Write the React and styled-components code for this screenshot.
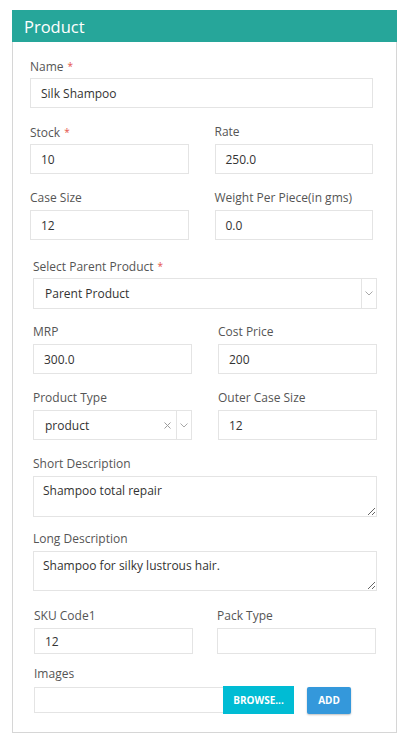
import React from "react";
import styled, { createGlobalStyle } from "styled-components";

const GlobalStyle = createGlobalStyle`
  body {
    margin: 0;
    background: #fff;
    font-family: "Open Sans", "Noto Sans", Arial, sans-serif;
  }
`;

const Page = styled.div`
  padding: 10px 0 0 12px;
`;

const Card = styled.div`
  width: 385px;
  box-sizing: border-box;
  border: 1px solid #d6d6d6;
  border-top: none;
`;

const Header = styled.div`
  background: #26a69a;
  height: 32px;
  padding-left: 12px;
  display: flex;
  align-items: center;
  color: #fff;
  font-size: 16.5px;
  margin: 0 -1px;
`;

const Body = styled.div`
  padding: 15px 0 18px;
`;

const Group = styled.div`
  padding: 0 ${(p) => p.$right}px 0 ${(p) => p.$left}px;
`;

const Row = styled.div`
  display: grid;
  grid-template-columns: 1fr 1fr;
  column-gap: ${(p) => p.$gap || 26}px;
`;

const Field = styled.div`
  margin-bottom: ${(p) => (p.$mb === undefined ? 15 : p.$mb)}px;
`;

const Label = styled.div`
  font-size: 12px;
  line-height: 18px;
  height: 18px;
  color: #555;
  margin-bottom: 3px;
  white-space: nowrap;
`;

const Req = styled.span`
  color: #e5534b;
  margin-left: 4px;
  font-size: 10px;
  vertical-align: 1px;
`;

const Box = styled.div`
  box-sizing: border-box;
  height: ${(p) => p.$h || 30}px;
  border: 1px solid #e4e4e4;
  display: flex;
  align-items: center;
  padding-left: 10px;
  font-size: 12px;
  color: #333;
  background: #fff;
`;

const SelectBox = styled(Box)`
  height: ${(p) => p.$h || 31}px;
  padding-left: 11px;
  padding-right: 0;
`;

const SelectValue = styled.div`
  flex: 1;
`;

const Clear = styled.div`
  width: 18px;
  display: flex;
  justify-content: center;
`;

const Arrow = styled.div`
  width: 14px;
  align-self: stretch;
  border-left: 1px solid #e4e4e4;
  display: flex;
  align-items: center;
  justify-content: center;
`;

const TextArea = styled.textarea`
  display: block;
  box-sizing: border-box;
  width: 100%;
  height: ${(p) => p.$h}px;
  margin: 0;
  border: 1px solid #e4e4e4;
  border-radius: 0;
  padding: 5px 9px;
  font-family: inherit;
  font-size: 12px;
  color: #333;
  resize: vertical;
  outline: none;
`;

const ImagesRow = styled.div`
  display: flex;
  align-items: center;
`;

const FileBox = styled.div`
  box-sizing: border-box;
  width: 189px;
  height: 26px;
  border: 1px solid #e4e4e4;
  border-right: none;
`;

const Button = styled.div`
  box-sizing: border-box;
  height: ${(p) => p.$h}px;
  width: ${(p) => p.$w}px;
  background: ${(p) => p.$bg};
  color: #fff;
  font-size: 10px;
  font-weight: 700;
  display: flex;
  align-items: center;
  justify-content: center;
  border-radius: ${(p) => p.$r || 0}px;
  box-shadow: ${(p) => (p.$shadow ? "0 1px 2px rgba(0,0,0,0.25)" : "none")};
  margin-left: ${(p) => p.$ml || 0}px;
`;

const Chevron = () => (
  <svg width="8" height="5" viewBox="0 0 8 5">
    <polyline points="0.5,0.5 4,4 7.5,0.5" fill="none" stroke="#a8a8a8" strokeWidth="1" />
  </svg>
);

const Cross = () => (
  <svg width="7" height="7" viewBox="0 0 7 7">
    <path d="M0.5 0.5 L6.5 6.5 M6.5 0.5 L0.5 6.5" stroke="#9c9c9c" strokeWidth="1" />
  </svg>
);

const Input = ({ label, required, value, h, mb }) => (
  <Field $mb={mb}>
    <Label>
      {label}
      {required && <Req>*</Req>}
    </Label>
    <Box $h={h}>{value}</Box>
  </Field>
);

export default function App() {
  return (
    <Page>
      <GlobalStyle />
      <Card>
        <Header>Product</Header>
        <Body>
          <Group $left={17} $right={23}>
            <Input label="Name" required value="Silk Shampoo" />
            <Row>
              <Input label="Stock" required value="10" />
              <Input label="Rate" value="250.0" />
            </Row>
            <Row>
              <Input label="Case Size" value="12" mb={17} />
              <Input label="Weight Per Piece(in gms)" value="0.0" mb={17} />
            </Row>
          </Group>
          <Group $left={20} $right={19}>
            <Field $mb={14}>
              <Label>
                Select Parent Product<Req>*</Req>
              </Label>
              <SelectBox>
                <SelectValue>Parent Product</SelectValue>
                <Arrow>
                  <Chevron />
                </Arrow>
              </SelectBox>
            </Field>
            <Row>
              <Input label="MRP" value="300.0" />
              <Input label="Cost Price" value="200" />
            </Row>
            <Row>
              <Field>
                <Label>Product Type</Label>
                <SelectBox $h={30}>
                  <SelectValue>product</SelectValue>
                  <Clear>
                    <Cross />
                  </Clear>
                  <Arrow>
                    <Chevron />
                  </Arrow>
                </SelectBox>
              </Field>
              <Input label="Outer Case Size" value="12" />
            </Row>
            <Field $mb={13}>
              <Label>Short Description</Label>
              <TextArea $h={41} defaultValue="Shampoo total repair" />
            </Field>
            <Field $mb={16}>
              <Label>Long Description</Label>
              <TextArea $h={40} defaultValue="Shampoo for silky lustrous hair." />
            </Field>
          </Group>
          <Group $left={21} $right={20}>
            <Row $gap={24}>
              <Input label="SKU Code1" value="12" h={26} mb={11} />
              <Input label="Pack Type" value="" h={26} mb={11} />
            </Row>
            <Field $mb={0}>
              <Label>Images</Label>
              <ImagesRow>
                <FileBox />
                <Button $bg="#00bcd4" $w={71} $h={28}>
                  BROWSE...
                </Button>
                <Button $bg="#3498db" $w={44} $h={27} $r={2} $shadow $ml={13}>
                  ADD
                </Button>
              </ImagesRow>
            </Field>
          </Group>
        </Body>
      </Card>
    </Page>
  );
}
